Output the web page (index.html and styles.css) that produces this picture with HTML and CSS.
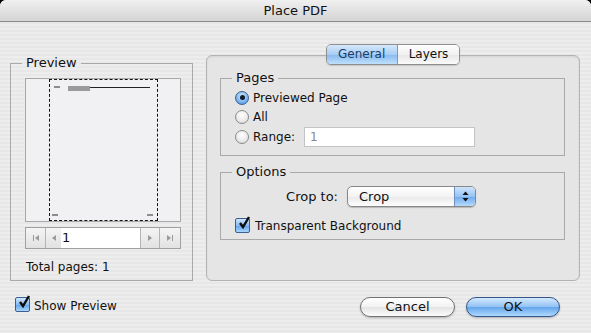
FILE: index.html
```html
<!DOCTYPE html>
<html lang="en">
<head>
    <meta charset="UTF-8">
    <title>Place PDF</title>
    <link rel="stylesheet" href="styles.css">
</head>
<body>

    <div id="window">
        <div class="titlebar">Place PDF</div>

        <div class="content">
            <!-- Preview column -->
            <fieldset class="group preview-group">
                <legend>Preview</legend>
                <div class="preview-area">
                    <div class="page">
                        <div class="page-top">
                            <span class="mark"></span>
                            <span class="mark-bar"></span>
                            <span class="mark-line"></span>
                        </div>
                        <div class="page-bottom">
                            <span class="mark"></span>
                            <span class="mark"></span>
                        </div>
                    </div>
                </div>
                <div class="pager">
                    <span class="pager-btn first">
                        <svg width="8" height="8" viewBox="0 0 8 8"><rect x="1" y="1" width="1" height="6" fill="#9a9a9a"/><path d="M7 1 L3 4 L7 7 Z" fill="#9a9a9a"/></svg>
                    </span>
                    <span class="pager-btn prev">
                        <svg width="6" height="8" viewBox="0 0 6 8"><path d="M5 1 L1 4 L5 7 Z" fill="#9a9a9a"/></svg>
                    </span>
                    <span class="pager-field">1</span>
                    <span class="pager-btn next">
                        <svg width="6" height="8" viewBox="0 0 6 8"><path d="M1 1 L5 4 L1 7 Z" fill="#9a9a9a"/></svg>
                    </span>
                    <span class="pager-btn last">
                        <svg width="8" height="8" viewBox="0 0 8 8"><path d="M1 1 L5 4 L1 7 Z" fill="#9a9a9a"/><rect x="6" y="1" width="1" height="6" fill="#9a9a9a"/></svg>
                    </span>
                </div>
                <div class="total">Total pages: 1</div>
            </fieldset>

            <!-- Settings column -->
            <div class="settings">
                <div class="tabs">
                    <span class="tab active">General</span>
                    <span class="tab">Layers</span>
                </div>
                <div class="panel">
                    <fieldset class="group pages-group">
                        <legend>Pages</legend>
                        <div class="row">
                            <span class="radio checked"></span>
                            <span>Previewed Page</span>
                        </div>
                        <div class="row">
                            <span class="radio"></span>
                            <span>All</span>
                        </div>
                        <div class="row range-row">
                            <span class="radio"></span>
                            <span>Range:</span>
                            <span class="text-field">1</span>
                        </div>
                    </fieldset>

                    <fieldset class="group options-group">
                        <legend>Options</legend>
                        <div class="row crop-row">
                            <span class="crop-label">Crop to:</span>
                            <span class="popup">
                                <span class="popup-value">Crop</span>
                                <span class="popup-arrows">
                                    <svg width="7" height="11" viewBox="0 0 7 11"><path d="M3.5 0.5 L6.5 4 L0.5 4 Z" fill="#111"/><path d="M3.5 10.5 L6.5 7 L0.5 7 Z" fill="#111"/></svg>
                                </span>
                            </span>
                        </div>
                        <div class="row check-row">
                            <span class="checkbox">
                                <svg width="14" height="14" viewBox="0 0 14 14"><path d="M3 7 L6 11 L12 1" fill="none" stroke="#0c0c0c" stroke-width="2.4"/></svg>
                            </span>
                            <span>Transparent Background</span>
                        </div>
                    </fieldset>
                </div>
            </div>

            <!-- Bottom row -->
            <div class="row show-preview">
                <span class="checkbox">
                    <svg width="14" height="14" viewBox="0 0 14 14"><path d="M3 7 L6 11 L12 1" fill="none" stroke="#0c0c0c" stroke-width="2.4"/></svg>
                </span>
                <span>Show Preview</span>
            </div>
            <div class="buttons">
                <span class="button">Cancel</span>
                <span class="button default">OK</span>
            </div>
        </div>
    </div>

</body>
</html>
```

FILE: styles.css
```css
body {
    margin: 0;
    background-color: #000;
    font-family: "DejaVu Sans", sans-serif;
    font-size: 12px;
    color: #111;
}
#window {
    width: 591px;
    height: 333px;
    border-radius: 6px 6px 0 0;
    overflow: hidden;
    background: repeating-linear-gradient(#ededed 0 2px, #e7e7e7 2px 4px);
}
.titlebar {
    height: 21px;
    line-height: 21px;
    text-align: center;
    font-size: 13px;
    color: #111;
    background: linear-gradient(#f0f0f0, #d4d4d4);
    border-bottom: 1px solid #8a8a8a;
}
.content {
    display: grid;
    grid-template-columns: 183px 374px;
    column-gap: 13px;
    padding: 22px 11px 0 10px;
}

/* group boxes */
.group {
    margin: 0;
    border: 1px solid #a9a9a9;
    min-width: 0;
}
.group legend {
    padding: 0 4px;
    margin-left: -3px;
    line-height: 16px;
    font-size: 13px;
}
.row {
    display: flex;
    align-items: center;
    gap: 4px;
}

/* preview */
.preview-group {
    margin-top: 11px;
    padding: 7px 11px 5px 14px;
}
.preview-area {
    width: 154px;
    height: 142px;
    border: 1px solid #a8a8a8;
    background-color: #f1f0f3;
    display: flex;
    justify-content: center;
}
.page {
    width: 107px;
    height: 140px;
    border: 1px dashed #111;
    display: flex;
    flex-direction: column;
    justify-content: space-between;
}
.page-top {
    display: flex;
    align-items: flex-start;
    padding: 6px 0 0 4px;
}
.page-bottom {
    display: flex;
    justify-content: space-between;
    padding: 0 4px 4px 2px;
}
.mark {
    width: 6px;
    height: 2px;
    background-color: #8c8c8c;
}
.mark-bar {
    width: 22px;
    height: 3px;
    margin-left: 8px;
    border-top: 2px solid #9a9a9a;
    background-color: #9a9a9a;
}
.mark-line {
    width: 60px;
    height: 1px;
    margin-top: 1px;
    background-color: #222;
}
.pager {
    display: flex;
    height: 20px;
    width: 154px;
    margin-top: 5px;
    border: 1px solid #a0a0a0;
    background-color: #d8d8d8;
}
.pager-btn {
    display: flex;
    align-items: center;
    justify-content: center;
    background: linear-gradient(#f4f4f4, #e2e2e2);
    border-right: 1px solid #b4b4b4;
}
.pager-btn.first { width: 19px; }
.pager-btn.prev { width: 15px; border-right: none; }
.pager-btn.next { width: 18px; border-left: 1px solid #b4b4b4; }
.pager-btn.last { width: 20px; border-right: none; }
.pager-field {
    flex: 1;
    background-color: #fff;
    font-size: 13px;
    line-height: 20px;
    padding-left: 1px;
}
.total {
    margin-top: 10px;
    line-height: 16px;
    padding-left: 1px;
}

/* settings */
.settings {
    display: flex;
    flex-direction: column;
    align-items: center;
}
.tabs {
    display: flex;
    height: 19px;
    border: 1px solid #8e8e8e;
    border-radius: 5px;
    overflow: hidden;
    position: relative;
    z-index: 1;
    box-shadow: 0 1px 1px rgba(0, 0, 0, 0.15);
}
.tab {
    line-height: 19px;
    font-size: 12px;
    padding: 0 11px;
    background: linear-gradient(#ffffff, #f1f1f1 50%, #e7e7e7 51%, #fafafa);
}
.tab.active {
    width: 48px;
    color: #1c3c68;
    text-align: center;
    border-right: 1px solid #7e98bc;
    background: linear-gradient(#d6e8fb, #a8cdf4 50%, #86b9ef 51%, #bfe0fc);
}
.panel {
    align-self: stretch;
    margin-top: -10px;
    padding: 14px 14px 40px 13px;
    border: 1px solid #b3b3b3;
    border-radius: 6px;
    background-color: #e5e5e5;
    box-shadow: inset 0 1px 2px rgba(0, 0, 0, 0.08);
}
.pages-group {
    padding: 2px 10px 8px 14px;
}
.pages-group .row { height: 19px; }
.pages-group .range-row { height: 21px; }
.radio {
    width: 12px;
    height: 12px;
    border-radius: 50%;
    border: 1px solid #8a8a8a;
    background: radial-gradient(circle at 50% 35%, #ffffff, #e9e9e9 60%, #cfcfcf);
    display: flex;
    align-items: center;
    justify-content: center;
}
.radio.checked {
    border-color: #3c5f92;
    background: radial-gradient(circle at 50% 35%, #d8ecff, #78b3ef 60%, #3e86db);
}
.radio.checked::after {
    content: "";
    width: 5px;
    height: 5px;
    border-radius: 50%;
    background-color: #0e1e34;
}
.text-field {
    width: 164px;
    height: 18px;
    line-height: 18px;
    margin-left: 5px;
    padding-left: 5px;
    border: 1px solid #c4c4c4;
    background-color: #fff;
    color: #888;
    font-size: 12px;
}
.options-group {
    margin-top: 8px;
    padding: 6px 10px 4px 14px;
}
.crop-row {
    height: 21px;
    gap: 9px;
}
.crop-label {
    width: 103px;
    text-align: right;
    font-size: 13px;
}
.popup {
    display: flex;
    width: 127px;
    height: 19px;
    border: 1px solid #888;
    border-radius: 5px;
    overflow: hidden;
    background: linear-gradient(#ffffff, #f3f3f3 50%, #e9e9e9 51%, #fdfdfd);
    box-shadow: 0 1px 1px rgba(0, 0, 0, 0.2);
}
.popup-value {
    flex: 1;
    line-height: 19px;
    padding-left: 11px;
    font-size: 13px;
}
.popup-arrows {
    width: 20px;
    display: flex;
    align-items: center;
    justify-content: center;
    border-left: 1px solid #6b8fc0;
    background: linear-gradient(#cfe5fb, #96c3f3 50%, #6faaec 51%, #b4dafb);
}
.check-row {
    height: 19px;
    margin-top: 9px;
    gap: 5px;
}
.checkbox {
    width: 13px;
    height: 13px;
    border: 1px solid #3c5f92;
    border-radius: 2px;
    background: linear-gradient(#cfe6fd, #87bcf2 50%, #5fa2ea 51%, #a9d5fb);
    position: relative;
}
.checkbox svg {
    position: absolute;
    left: 1px;
    top: -3px;
}

/* bottom row */
.show-preview {
    margin-top: 15px;
    padding-left: 5px;
    height: 20px;
    gap: 4px;
    font-size: 12px;
}
.show-preview .checkbox {
    margin-top: -4px;
}
.buttons {
    margin-top: 16px;
    display: flex;
    justify-content: flex-end;
    gap: 11px;
    padding-right: 20px;
}
.button {
    width: 93px;
    height: 18px;
    line-height: 18px;
    text-align: center;
    font-size: 13px;
    border: 1px solid #727272;
    border-radius: 10px;
    background: linear-gradient(#ffffff, #f2f2f2 50%, #e4e4e4 51%, #fbfbfb);
    box-shadow: 0 1px 2px rgba(0, 0, 0, 0.25);
}
.button.default {
    width: 92px;
    border-color: #34578a;
    background: linear-gradient(#d3e8fd, #90c1f4 50%, #63a4ec 51%, #b0dafd);
}
```
